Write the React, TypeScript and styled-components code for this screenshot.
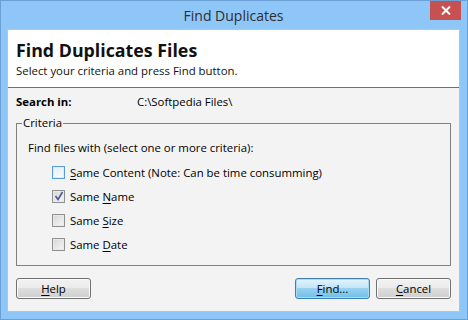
import styled, { createGlobalStyle } from "styled-components";

const GlobalStyle = createGlobalStyle`
    html, body {
        margin: 0;
        padding: 0;
        background: #8ec6f7;
    }
    body {
        font-family: "Open Sans", "Noto Sans", "DejaVu Sans", sans-serif;
        font-size: 11.4px;
        color: #000;
    }
`;

const Window = styled.div`
    width: 468px;
    height: 320px;
    box-sizing: border-box;
    border: 1px solid #6c9fd4;
    background: #8ec6f7;
    padding: 0 7px 7px 6px;
    display: flex;
    flex-direction: column;
`;

const TitleBar = styled.div`
    height: 28px;
    display: grid;
    grid-template-columns: 1fr auto 1fr;
    align-items: start;
`;

const TitleText = styled.div`
    grid-column: 2;
    font-size: 14px;
    line-height: 29px;
    color: #2e2e2e;
`;

const CloseButton = styled.div`
    grid-column: 3;
    justify-self: end;
    margin-right: -1px;
    width: 31px;
    height: 19px;
    background: #c75050;
    display: flex;
    align-items: center;
    justify-content: center;
`;

const Client = styled.div`
    flex: 1;
    border: 1px solid #a6c8ea;
    background: #f3f3f3;
    display: flex;
    flex-direction: column;
`;

const Header = styled.div`
    background: #fff;
    height: 58px;
    box-sizing: border-box;
    border-bottom: 1px solid #707070;
    padding: 7px 8px 0;
`;

const HeaderTitle = styled.div`
    font-size: 17.8px;
    font-weight: 700;
    line-height: 26px;
    color: #111;
`;

const HeaderSub = styled.div`
    line-height: 16px;
    color: #111;
`;

const Body = styled.div`
    flex: 1;
    padding: 5px 8px 0;
    display: flex;
    flex-direction: column;
`;

const SearchRow = styled.div`
    display: flex;
    line-height: 18px;
`;

const SearchLabel = styled.div`
    width: 121px;
    font-weight: 700;
`;

const Group = styled.fieldset`
    margin: 4px 0 0;
    padding: 0;
    height: 151px;
    box-sizing: border-box;
    border: 1px solid #808080;
`;

const Legend = styled.legend`
    margin-left: 5px;
    padding: 0 1px;
    line-height: 16px;
`;

const GroupIntro = styled.div`
    margin: 8px 0 0 11px;
    line-height: 18px;
`;

const Options = styled.div`
    margin: 6px 0 0 35px;
    display: flex;
    flex-direction: column;
    gap: 6px;
`;

const OptionRow = styled.label`
    display: flex;
    align-items: center;
    gap: 5px;
    height: 18px;
`;

const Box = styled.span<{ $focused?: boolean }>`
    width: 11px;
    height: 11px;
    border: 1px solid ${p => (p.$focused ? "#5c9ad6" : "#8f8f8f")};
    background: ${p =>
        p.$focused
            ? "linear-gradient(#e4f2fc, #f6fbff)"
            : "linear-gradient(135deg, #d6d6d6, #f6f6f6)"};
    box-shadow: inset 0 0 0 1px ${p => (p.$focused ? "#dbeefb" : "#e9e9e9")};
    display: flex;
    align-items: center;
    justify-content: center;
    flex-shrink: 0;
`;

const Footer = styled.div`
    margin-top: 12px;
    display: flex;
    gap: 6px;
`;

const Spacer = styled.div`
    flex: 1;
`;

const Button = styled.div<{ $primary?: boolean }>`
    width: 75px;
    height: 21px;
    box-sizing: border-box;
    border: 1px solid ${p => (p.$primary ? "#3c7fb1" : "#707070")};
    border-radius: 3px;
    background: ${p =>
        p.$primary
            ? "linear-gradient(#e5f4fc 0%, #c4e5f6 45%, #98d1ef 50%, #6dc0ea 100%)"
            : "linear-gradient(#f2f2f2 0%, #ebebeb 45%, #dddddd 50%, #cfcfcf 100%)"};
    box-shadow: inset 0 0 0 1px ${p => (p.$primary ? "#a9dbf6" : "#fbfbfb")};
    display: flex;
    align-items: center;
    justify-content: center;
    line-height: 19px;
    color: #000;
`;

const Mnemonic = styled.u`
    text-decoration-thickness: 1px;
    text-underline-offset: 2px;
`;

const CheckMark = () => (
    <svg width="10" height="10" viewBox="0 0 10 10">
        <path d="M1.5 5 L4 8.5 L8.5 1" fill="none" stroke="#4a5a96" strokeWidth="1.6" />
    </svg>
);

const options = [
    { id: "content", key: "S", rest: "ame Content (Note: Can be time consumming)", checked: false, focused: true },
    { id: "name", pre: "Same ", key: "N", rest: "ame", checked: true },
    { id: "size", pre: "Same ", key: "S", rest: "ize", checked: false },
    { id: "date", pre: "Same ", key: "D", rest: "ate", checked: false },
];

export default function App() {
    return (
        <Window>
            <GlobalStyle />
            <TitleBar>
                <TitleText>Find Duplicates</TitleText>
                <CloseButton>
                    <svg width="10" height="9" viewBox="0 0 10 9">
                        <path d="M1 0.5 L9 8.5 M9 0.5 L1 8.5" stroke="#fff" strokeWidth="2" />
                    </svg>
                </CloseButton>
            </TitleBar>
            <Client>
                <Header>
                    <HeaderTitle>Find Duplicates Files</HeaderTitle>
                    <HeaderSub>Select your criteria and press Find button.</HeaderSub>
                </Header>
                <Body>
                    <SearchRow>
                        <SearchLabel>Search in:</SearchLabel>
                        <div>C:\Softpedia Files\</div>
                    </SearchRow>
                    <Group>
                        <Legend>Criteria</Legend>
                        <GroupIntro>Find files with (select one or more criteria):</GroupIntro>
                        <Options>
                            {options.map(o => (
                                <OptionRow key={o.id}>
                                    <Box $focused={o.focused}>{o.checked && <CheckMark />}</Box>
                                    <span>
                                        {o.pre}
                                        <Mnemonic>{o.key}</Mnemonic>
                                        {o.rest}
                                    </span>
                                </OptionRow>
                            ))}
                        </Options>
                    </Group>
                    <Footer>
                        <Button>
                            <span><Mnemonic>H</Mnemonic>elp</span>
                        </Button>
                        <Spacer />
                        <Button $primary>
                            <span><Mnemonic>F</Mnemonic>ind...</span>
                        </Button>
                        <Button>
                            <span><Mnemonic>C</Mnemonic>ancel</span>
                        </Button>
                    </Footer>
                </Body>
            </Client>
        </Window>
    );
}
